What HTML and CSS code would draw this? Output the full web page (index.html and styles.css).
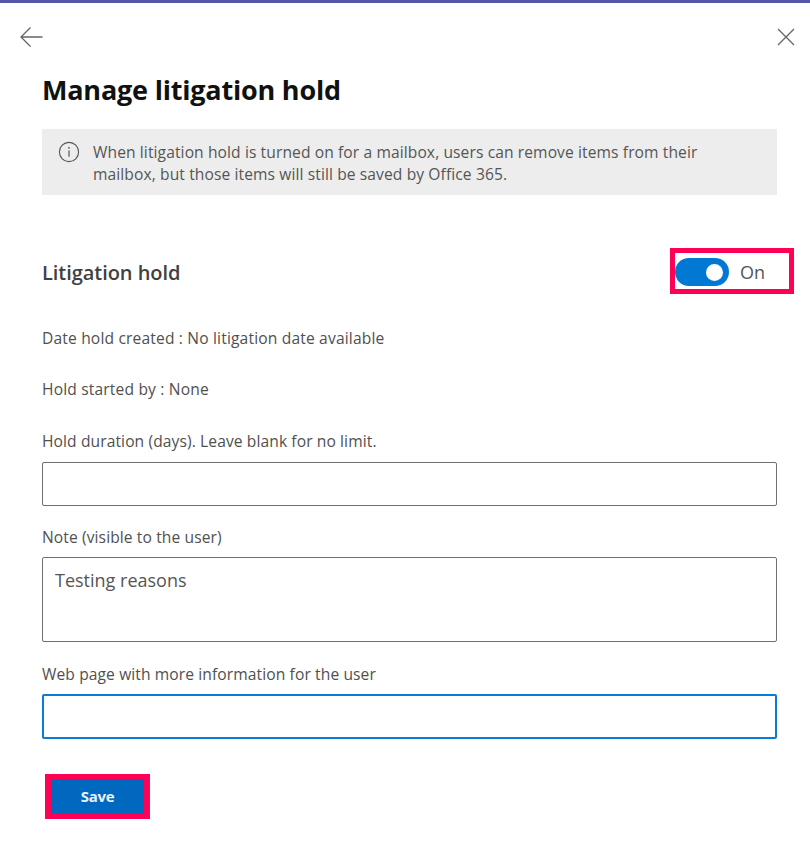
FILE: index.html
```html
<!DOCTYPE html>
<html lang="en">
<head>
<meta charset="utf-8">
<title>Manage litigation hold</title>
<link rel="stylesheet" href="styles.css">
</head>
<body>
<div class="panel">
  <header class="topbar">
    <svg class="icon-back" width="26" height="22" viewBox="0 0 26 22"><path d="M23.5 11H2M11.5 1.5 2 11l9.5 9.5" fill="none" stroke="#666" stroke-width="1.3"/></svg>
    <svg class="icon-close" width="20" height="20" viewBox="0 0 20 20"><path d="M2 2l16 16M18 2 2 18" fill="none" stroke="#666" stroke-width="1.3"/></svg>
  </header>
  <main class="content">
    <h1 class="title">Manage litigation hold</h1>
    <div class="info">
      <svg class="icon-info" width="22" height="22" viewBox="0 0 22 22"><circle cx="11" cy="11" r="9.6" fill="none" stroke="#555" stroke-width="1.1"/><path d="M11 9.6v6.2" stroke="#555" stroke-width="1.2"/><circle cx="11" cy="6.8" r=".9" fill="#555"/></svg>
      <p class="info-text">When litigation hold is turned on for a mailbox, users can remove items from their mailbox, but those items will still be saved by Office 365.</p>
    </div>
    <div class="hold-row">
      <h2 class="hold-title">Litigation hold</h2>
      <div class="mark toggle-wrap">
        <span class="toggle"><span class="knob"></span></span>
        <span class="toggle-label">On</span>
      </div>
    </div>
    <p class="meta first">Date hold created : No litigation date available</p>
    <p class="meta second">Hold started by : None</p>
    <label class="label third">Hold duration (days). Leave blank for no limit.</label>
    <div class="field"></div>
    <label class="label">Note (visible to the user)</label>
    <div class="field area">Testing reasons</div>
    <label class="label">Web page with more information for the user</label>
    <div class="field focus"></div>
    <div class="mark save-wrap"><button class="save">Save</button></div>
  </main>
</div>
</body>
</html>
```
FILE: styles.css
```css
* { box-sizing: border-box; }
html, body { margin: 0; height: 100%; background: #fff; }
body { font-family: "Open Sans", "Noto Sans", sans-serif; color: #4d4d4d; overflow: hidden; }
.panel { height: 867px; border-top: 3px solid #5558a9; }
.topbar { display: flex; justify-content: space-between; align-items: center; height: 44px; padding: 24px 14px 0 19px; }
.content { padding: 0 33px 0 42px; }
.title { margin: 25px 0 0; font-size: 27px; line-height: 36px; font-weight: 700; color: #111; letter-spacing: -.2px; }
.info { display: flex; gap: 13px; height: 66px; margin-top: 21px; padding: 12px 60px 0 16px; background: #ededed; }
.icon-info { flex: none; margin-top: 0; }
.info-text { margin: 0; font-size: 15.6px; line-height: 22px; letter-spacing: .1px; color: #555; }
.hold-row { display: flex; justify-content: space-between; align-items: center; height: 46px; margin-top: 53px; margin-right: -17px; }
.hold-title { margin: 4px 0 0; font-size: 20px; font-weight: 600; line-height: 26px; color: #404040; letter-spacing: -.05px; }
.mark { border: 5px solid #ff0055; }
.toggle-wrap { display: flex; align-items: center; gap: 11px; width: 124px; height: 46px; padding-top: 2px; }
.toggle { display: flex; align-items: center; justify-content: flex-end; width: 54px; height: 28px; padding-right: 6px; margin-left: 0; border-radius: 14px; background: #0078d4; }
.knob { width: 17px; height: 17px; border-radius: 50%; background: #fff; }
.toggle-label { font-size: 18px; color: #555; }
.meta, .label { display: block; margin: 0; font-size: 15.6px; line-height: 22px; letter-spacing: .1px; color: #505050; }
.meta { letter-spacing: .16px; }
.first { margin-top: 33px; }
.second { margin-top: 29px; }
.third { margin-top: 30px; }
.field { height: 44px; margin-top: 10px; margin-bottom: 20px; border: 1px solid #707070; border-radius: 2px; background: #fff; }
.area { height: 85px; margin-top: 9px; padding: 9px 12px; font-size: 18px; line-height: 26px; color: #555; margin-bottom: 21px; }
.focus { height: 45px; margin-top: 9px; margin-bottom: 35px; border: 2px solid #0a7cd6; }
.save-wrap { display: inline-flex; margin-left: 3px; border-width: 5px 6px; }
.save { width: 93px; height: 35px; padding: 0; border: 0; background: #0069bf; color: #e8f0fa; font: 700 15px/35px "Open Sans", sans-serif; letter-spacing: -.3px; }
```
